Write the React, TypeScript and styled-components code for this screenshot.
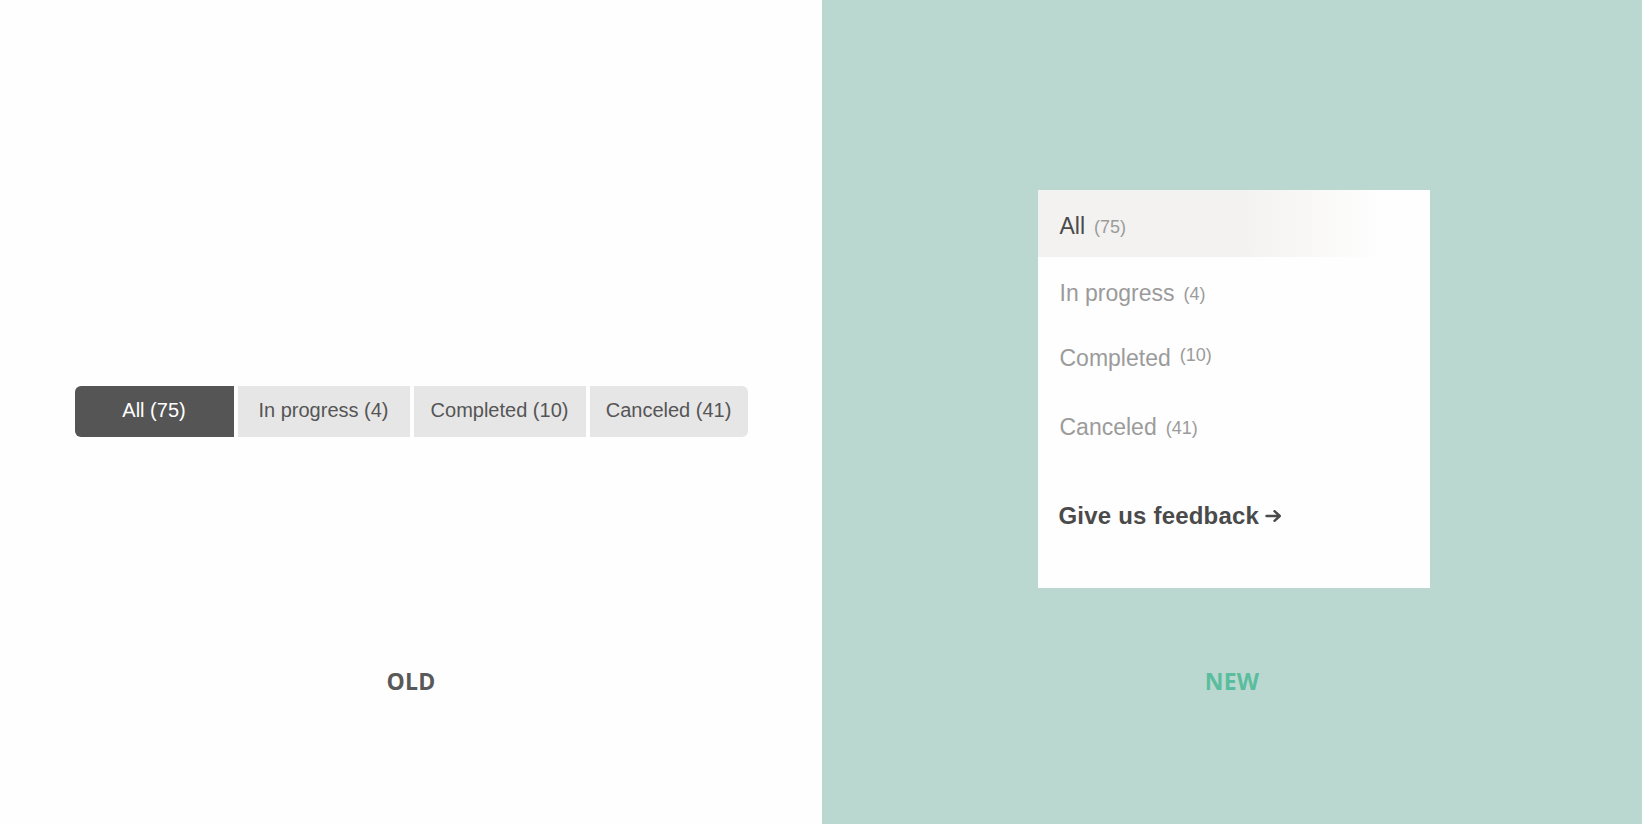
import React from "react";
import styled, { createGlobalStyle } from "styled-components";

const GlobalStyle = createGlobalStyle`
  html, body {
    margin: 0;
    padding: 0;
    background: #fefefe;
  }
  body {
    font-family: "Liberation Sans", Arial, sans-serif;
  }
`;

const Page = styled.div`
  display: grid;
  grid-template-columns: 822px 820px;
  width: 1642px;
  height: 824px;
  overflow: hidden;
`;

const Half = styled.section<{ $bg: string; $top: number; $gap: number }>`
  display: flex;
  flex-direction: column;
  align-items: center;
  background: ${(p) => p.$bg};
  padding-top: ${(p) => p.$top}px;
  gap: ${(p) => p.$gap}px;
  box-sizing: border-box;
`;

const Caption = styled.div<{ $color: string }>`
  font-family: "Open Sans", "Noto Sans", sans-serif;
  font-weight: 700;
  font-size: 23px;
  line-height: 30px;
  letter-spacing: 0.3px;
  color: ${(p) => p.$color};
`;

/* ---------- OLD segmented tabs ---------- */

const TabBar = styled.div`
  display: flex;
  gap: 4px;
  height: 51px;
`;

const Tab = styled.button<{ $active?: boolean; $width: number }>`
  all: unset;
  box-sizing: border-box;
  width: ${(p) => p.$width}px;
  height: 100%;
  display: flex;
  align-items: center;
  justify-content: center;
  font-family: "Liberation Sans", Arial, sans-serif;
  font-size: 20px;
  color: ${(p) => (p.$active ? "#ffffff" : "#555555")};
  background: ${(p) => (p.$active ? "#555555" : "#e6e6e6")};
  padding-bottom: 3px;
  &:first-child {
    border-radius: 6px 0 0 6px;
  }
  &:last-child {
    border-radius: 0 6px 6px 0;
  }
`;

/* ---------- NEW vertical menu ---------- */

const Panel = styled.nav`
  width: 392px;
  height: 398px;
  margin-left: 3px;
  background: #fefefe;
  display: flex;
  flex-direction: column;
`;

const MenuItem = styled.div<{ $active?: boolean; $h: number }>`
  box-sizing: border-box;
  height: ${(p) => p.$h}px;
  padding: 5px 0 0 22px;
  display: flex;
  align-items: center;
  gap: 9px;
  font-size: 23px;
  color: ${(p) => (p.$active ? "#4a4a4a" : "#9b9b9b")};
  background: ${(p) =>
    p.$active
      ? "linear-gradient(to right, #f3f2f0 0%, #f3f2f0 52%, #fefefe 88%)"
      : "transparent"};
`;

const Count = styled.span<{ $raised?: boolean }>`
  font-size: 18px;
  color: #9b9b9b;
  position: relative;
  top: ${(p) => (p.$raised ? "-3px" : "1px")};
`;

const Feedback = styled.a`
  margin-top: 40px;
  padding-left: 21px;
  display: flex;
  align-items: center;
  gap: 6px;
  font-size: 24px;
  font-weight: 700;
  letter-spacing: 0.2px;
  line-height: 27px;
  color: #4a4a4a;
  text-decoration: none;
`;

const Arrow = () => (
  <svg width="17" height="12" viewBox="0 0 17 12" style={{ marginTop: 1 }}>
    <path
      d="M1.5 6 H14.5 M9.5 1.2 L14.8 6 L9.5 10.8"
      fill="none"
      stroke="#4a4a4a"
      strokeWidth="2.4"
      strokeLinecap="round"
      strokeLinejoin="round"
    />
  </svg>
);

const oldTabs = [
  { label: "All (75)", width: 159, active: true },
  { label: "In progress (4)", width: 172 },
  { label: "Completed (10)", width: 172 },
  { label: "Canceled (41)", width: 158 },
];

const newItems = [
  { label: "All", count: 75, active: true, h: 67 },
  { label: "In progress", count: 4, h: 67 },
  { label: "Completed", count: 10, raised: true, h: 64 },
  { label: "Canceled", count: 41, h: 74 },
];

export default function App() {
  return (
    <>
      <GlobalStyle />
      <Page>
        <Half $bg="#fefefe" $top={386} $gap={229}>
          <TabBar>
            {oldTabs.map((t) => (
              <Tab key={t.label} $active={t.active} $width={t.width}>
                {t.label}
              </Tab>
            ))}
          </TabBar>
          <Caption $color="#595959">OLD</Caption>
        </Half>
        <Half $bg="#bbd8d0" $top={190} $gap={78}>
          <Panel>
            {newItems.map((it) => (
              <MenuItem key={it.label} $active={it.active} $h={it.h}>
                <span>{it.label}</span>
                <Count $raised={it.raised}>({it.count})</Count>
              </MenuItem>
            ))}
            <Feedback href="#">
              Give us feedback
              <Arrow />
            </Feedback>
          </Panel>
          <Caption $color="#5abd9d">NEW</Caption>
        </Half>
      </Page>
    </>
  );
}
